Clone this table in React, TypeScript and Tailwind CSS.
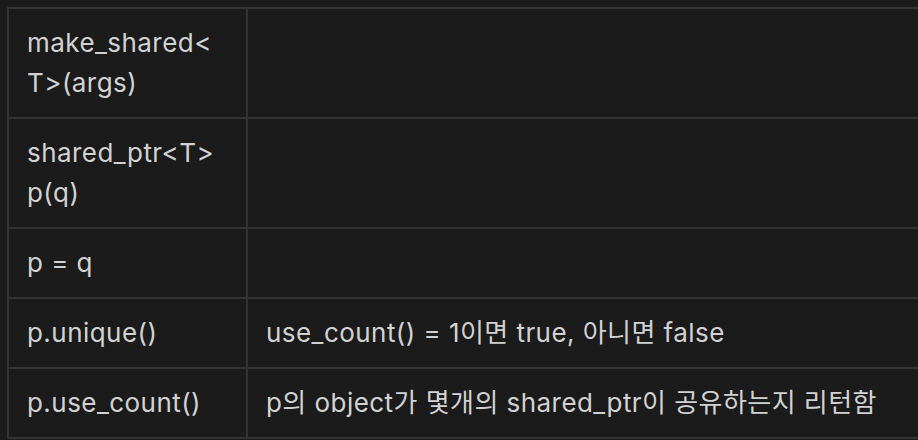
const rows: [string, string][] = [
  ["make_shared<T>(args)", ""],
  ["shared_ptr<T> p(q)", ""],
  ["p = q", ""],
  ["p.unique()", "use_count() = 1이면 true, 아니면 false"],
  ["p.use_count()", "p의 object가 몇개의 shared_ptr이 공유하는지 리턴함"],
];

export default function App() {
  return (
    <div className="w-[918px] h-[440px] overflow-hidden bg-[#1b1b1b] pt-[7px] pl-[7px] font-['Inter','Noto_Sans_CJK_KR',sans-serif] text-[26px] tracking-[0.45px] leading-[40px] text-[#d2d2d2]">
      <div className="grid w-[1000px] grid-cols-[239px_1fr] border-t-2 border-l-2 border-[#333333]">
        {rows.map(([a, b], i) => (
          <div key={i} className="contents">
            <div className="border-r-2 border-b-2 border-[#333333] px-[18px] py-[14px] whitespace-nowrap">
              {a === "make_shared<T>(args)" ? (
                <>
                  make_shared&lt;
                  <br />
                  T&gt;(args)
                </>
              ) : a === "shared_ptr<T> p(q)" ? (
                <>
                  shared_ptr&lt;T&gt;
                  <br />
                  p(q)
                </>
              ) : (
                a
              )}
            </div>
            <div className="border-r-2 border-b-2 border-[#333333] px-[18px] py-[14px] whitespace-nowrap">
              {b || "\u00a0"}
            </div>
          </div>
        ))}
      </div>
    </div>
  );
}
